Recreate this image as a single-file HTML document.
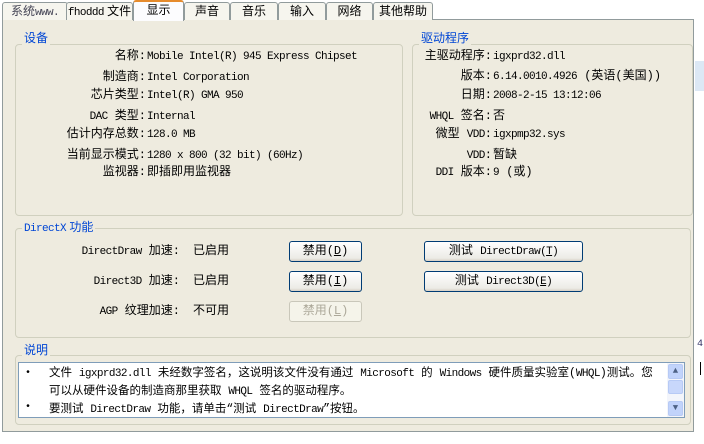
<!DOCTYPE html>
<html><head><meta charset="utf-8"><style>
*{margin:0;padding:0;box-sizing:border-box}
body{width:704px;height:444px;overflow:hidden;background:#fff;position:relative;font-family:"Liberation Mono","Noto Sans CJK SC",monospace;font-size:12px;color:#000}
.a{position:absolute;white-space:nowrap;line-height:14px}
i{font-style:normal;font-size:11px;letter-spacing:-0.6px;font-family:"Liberation Mono",monospace}
.r{text-align:right}
.tab{position:absolute;top:2px;height:18px;background:#f6f5ee;border:1px solid #919b9c;border-bottom:none;border-radius:3px 3px 0 0;text-align:center;line-height:16px;font-family:"Liberation Sans","Noto Sans CJK SC",sans-serif;font-size:12px}
.panel{position:absolute;left:2px;top:19px;width:692px;height:413px;background:#eeebdf;border:1px solid #919b9c}
.grp{position:absolute;border:1px solid #d0d0bf;border-radius:4px}
.gt{position:absolute;color:#0046d5;background:#eeebdf;padding:0 2px;font-family:"Liberation Sans","Noto Sans CJK SC",sans-serif;font-size:12px;line-height:14px}
.btn{position:absolute;height:21px;border:1px solid #003c74;border-radius:3px;background:linear-gradient(#fff,#ecebe6 85%,#d6d0c5);text-align:center;line-height:19px}
.dis{border-color:#c9c7ba;color:#aca899;background:#f5f4ea}
</style></head><body>
<div class="panel"></div>
<div class="tab" style="left:2px;width:66px;color:#445">系统<i>www.</i></div>
<div class="tab" style="left:66px;width:67px"><i>fhoddd</i> 文件</div>
<div class="tab" style="left:133px;top:0;width:51px;height:21px;background:#fcfcfe;border-top:2px solid #e68b2c;z-index:2">显示</div>
<div class="tab" style="left:184px;width:46px">声音</div>
<div class="tab" style="left:230px;width:48px">音乐</div>
<div class="tab" style="left:278px;width:48px">输入</div>
<div class="tab" style="left:326px;width:47px">网络</div>
<div class="tab" style="left:373px;width:60px">其他帮助</div>

<div class="grp" style="left:15px;top:44px;width:388px;height:172px"></div>
<div class="gt" style="left:22px;top:31px">设备</div>
<div class="a r" style="left:20px;width:126px;top:49px">名称:</div><div class="a" style="left:147px;top:49px"><i>Mobile Intel(R) 945 Express Chipset</i></div>
<div class="a r" style="left:20px;width:126px;top:70px">制造商:</div><div class="a" style="left:147px;top:70px"><i>Intel Corporation</i></div>
<div class="a r" style="left:20px;width:126px;top:88px">芯片类型:</div><div class="a" style="left:147px;top:88px"><i>Intel(R) GMA 950</i></div>
<div class="a r" style="left:20px;width:126px;top:109px"><i>DAC</i> 类型:</div><div class="a" style="left:147px;top:109px"><i>Internal</i></div>
<div class="a r" style="left:20px;width:126px;top:127px">估计内存总数:</div><div class="a" style="left:147px;top:127px"><i>128.0 MB</i></div>
<div class="a r" style="left:20px;width:126px;top:148px">当前显示模式:</div><div class="a" style="left:147px;top:148px"><i>1280 x 800 (32 bit) (60Hz)</i></div>
<div class="a r" style="left:20px;width:126px;top:165px">监视器:</div><div class="a" style="left:147px;top:165px">即插即用监视器</div>

<div class="grp" style="left:412px;top:44px;width:281px;height:172px"></div>
<div class="gt" style="left:419px;top:31px">驱动程序</div>
<div class="a r" style="left:400px;width:92px;top:49px">主驱动程序:</div><div class="a" style="left:493px;top:49px"><i>igxprd32.dll</i></div>
<div class="a r" style="left:400px;width:92px;top:69px">版本:</div><div class="a" style="left:493px;top:69px"><i>6.14.0010.4926</i> (英语(美国))</div>
<div class="a r" style="left:400px;width:92px;top:88px">日期:</div><div class="a" style="left:493px;top:88px"><i>2008-2-15 13:12:06</i></div>
<div class="a r" style="left:400px;width:92px;top:109px"><i>WHQL</i> 签名:</div><div class="a" style="left:493px;top:109px">否</div>
<div class="a r" style="left:400px;width:92px;top:127px">微型 <i>VDD</i>:</div><div class="a" style="left:493px;top:127px"><i>igxpmp32.sys</i></div>
<div class="a r" style="left:400px;width:92px;top:148px"><i>VDD</i>:</div><div class="a" style="left:493px;top:148px">暂缺</div>
<div class="a r" style="left:400px;width:92px;top:165px"><i>DDI</i> 版本:</div><div class="a" style="left:493px;top:165px"><i>9</i> (或)</div>

<div class="grp" style="left:15px;top:228px;width:676px;height:110px"></div>
<div class="gt" style="left:22px;top:220px"><i>DirectX</i> 功能</div>
<div class="a r" style="left:20px;width:160px;top:244px"><i>DirectDraw</i> 加速:</div><div class="a" style="left:193px;top:244px">已启用</div>
<div class="a r" style="left:20px;width:160px;top:274px"><i>Direct3D</i> 加速:</div><div class="a" style="left:193px;top:274px">已启用</div>
<div class="a r" style="left:20px;width:160px;top:304px"><i>AGP</i> 纹理加速:</div><div class="a" style="left:193px;top:304px">不可用</div>
<div class="btn" style="left:289px;top:241px;width:73px">禁用(<u>D</u>)</div>
<div class="btn" style="left:289px;top:271px;width:73px">禁用(<u>I</u>)</div>
<div class="btn dis" style="left:289px;top:301px;width:73px">禁用(<u>L</u>)</div>
<div class="btn" style="left:424px;top:241px;width:159px">测试 <i>DirectDraw(<u>T</u>)</i></div>
<div class="btn" style="left:424px;top:271px;width:159px">测试 <i>Direct3D(<u>E</u>)</i></div>

<div class="grp" style="left:15px;top:355px;width:676px;height:70px"></div>
<div class="gt" style="left:22px;top:343px">说明</div>
<div style="position:absolute;left:18px;top:362px;width:667px;height:56px;background:#fff;border:1px solid #7f9db9;overflow:hidden">
<div class="a" style="left:6px;top:2px;font-size:10px;line-height:17px">•<br><br>•<br>•</div>
<div class="a" style="left:30px;top:2px;line-height:17px;font-size:11.5px">文件 <i>igxprd32.dll</i> 未经数字签名，这说明该文件没有通过 <i>Microsoft</i> 的 <i>Windows</i> 硬件质量实验室(<i>WHQL</i>)测试。您<br>可以从硬件设备的制造商那里获取 <i>WHQL</i> 签名的驱动程序。<br>要测试 <i>DirectDraw</i> 功能，请单击“测试 <i>DirectDraw</i>”按钮。<br>要测试 <i>Direct3D</i> 功能，请单击下面的“测试 <i>Direct3D</i>”按钮。</div>
<div style="position:absolute;right:0;top:0;width:17px;height:54px;background:#f3f5fb"></div>
<div style="position:absolute;right:1px;top:1px;width:15px;height:15px;background:#c1d3fb;border:1px solid #b7caf5;border-radius:2px;color:#4d6185;font-size:9px;text-align:center;line-height:13px">▲</div>
<div style="position:absolute;right:1px;top:17px;width:15px;height:14px;background:#c8d7fb;border:1px solid #b7caf5;border-radius:2px"></div>
<div style="position:absolute;right:1px;top:38px;width:15px;height:15px;background:#c1d3fb;border:1px solid #b7caf5;border-radius:2px;color:#4d6185;font-size:9px;text-align:center;line-height:13px">▼</div>
</div>
<div style="position:absolute;left:695px;top:61px;width:9px;height:30px;background:#dce8f5"></div>
<div class="a" style="left:697px;top:338px;color:#336;font-size:10px">4</div>
<div style="position:absolute;left:700px;top:362px;width:1px;height:13px;background:#000"></div>
</body></html>
